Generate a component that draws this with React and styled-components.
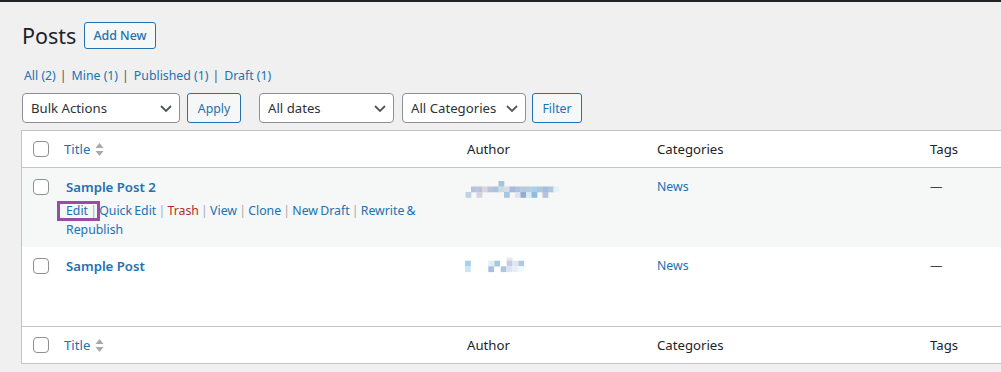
import React from "react";
import styled, { createGlobalStyle } from "styled-components";

const GlobalStyle = createGlobalStyle`
  html, body {
    margin: 0;
    padding: 0;
    background: #f0f0f1;
    overflow: hidden;
    font-family: "Noto Sans", "Open Sans", sans-serif;
    color: #3c434a;
  }
`;

const TopBar = styled.div`
  height: 2px;
  background: #1d2327;
`;

const Wrap = styled.div`
  padding: 20px 0 0 21px;
  width: 1300px;
`;

const HeadingRow = styled.div`
  display: flex;
  align-items: center;
  height: 27px;
  padding-left: 1px;
`;

const PageTitle = styled.h1`
  margin: 0;
  font-size: 21.5px;
  font-weight: 400;
  line-height: 27px;
  color: #1d2327;
`;

const AddNew = styled.a`
  margin-left: 8px;
  height: 27px;
  box-sizing: border-box;
  padding: 0 8px;
  display: flex;
  align-items: center;
  border: 1px solid #2271b1;
  border-radius: 3px;
  background: #f6f7f7;
  color: #2271b1;
  font-size: 12.4px;
  font-weight: 500;
`;

const SubNav = styled.div`
  margin-top: 16px;
  padding-left: 3px;
  display: flex;
  align-items: center;
  height: 20px;
  font-size: 12.3px;
`;

const SubLink = styled.a`
  color: #2271b1;
`;

const SubSep = styled.span`
  color: #50575e;
  margin: 0 5px 0 4px;
`;

const TableNav = styled.div`
  margin-top: 8px;
  display: flex;
  align-items: center;
  height: 30px;
  padding-left: 1px;
`;

const Select = styled.div`
  width: ${(p) => p.$w}px;
  height: 30px;
  box-sizing: border-box;
  margin-left: ${(p) => p.$gap || 0}px;
  padding: 0 7px 0 8px;
  display: flex;
  align-items: center;
  justify-content: space-between;
  border: 1px solid #8c8f94;
  border-radius: 4px;
  background: #fff;
  color: #2c3338;
  font-size: 13.2px;
`;

const Button = styled.div`
  width: ${(p) => p.$w}px;
  height: 30px;
  box-sizing: border-box;
  margin-left: ${(p) => p.$gap || 0}px;
  display: flex;
  align-items: center;
  justify-content: center;
  border: 1px solid #2271b1;
  border-radius: 3px;
  background: #f6f7f7;
  color: #2271b1;
  font-size: 12.3px;
`;

const Table = styled.table`
  margin-top: 7px;
  width: 1280px;
  table-layout: fixed;
  border-collapse: separate;
  border-spacing: 0;
  border: 1px solid #c3c4c7;
  background: #fff;
  font-size: 12.3px;
`;

const Th = styled.th`
  height: 37px;
  box-sizing: border-box;
  padding: 0 10px;
  text-align: left;
  font-weight: 400;
  font-size: 13.2px;
  color: #1d2327;
  vertical-align: middle;
  ${(p) => (p.$foot ? "border-top: 1px solid #c3c4c7;" : "border-bottom: 1px solid #c3c4c7;")}
`;

const CheckCell = styled.td`
  padding: ${(p) => (p.$head ? "0 0 0 11px" : "11px 0 0 11px")};
  vertical-align: ${(p) => (p.$head ? "middle" : "top")};
  ${(p) => p.$head && (p.$foot ? "border-top: 1px solid #c3c4c7;" : "border-bottom: 1px solid #c3c4c7;")}
`;

const Checkbox = styled.span`
  display: block;
  width: 16px;
  height: 16px;
  box-sizing: border-box;
  border: 1px solid #8c8f94;
  border-radius: 4px;
  background: #fff;
`;

const SortLink = styled.a`
  display: inline-flex;
  align-items: center;
  gap: 5px;
  color: #2271b1;
  margin-left: -2px;
`;

const Row = styled.tr`
  background: ${(p) => (p.$alt ? "#f6f7f7" : "#fff")};
`;

const Td = styled.td`
  padding: 9px 10px 8px;
  vertical-align: top;
  line-height: 20px;
  color: #50575e;
`;

const RowTitle = styled.a`
  display: block;
  font-size: 13.2px;
  font-weight: 600;
  color: #2271b1;
  line-height: 20px;
`;

const RowActions = styled.div`
  margin-top: 4px;
  line-height: 19px;
  height: 38px;
  color: #a7aaad;
  word-spacing: -1px;
  visibility: ${(p) => (p.$hidden ? "hidden" : "visible")};
`;

const ActionLink = styled.a`
  color: ${(p) => (p.$danger ? "#b32d2e" : "#2271b1")};
`;

const Highlight = styled.span`
  position: relative;
  display: inline-block;

  &::after {
    content: "";
    position: absolute;
    left: -9px;
    right: -3px;
    top: 0;
    height: 20px;
    box-sizing: border-box;
    border: 3px solid #9c4aa7;
  }
`;

const CellLink = styled.a`
  color: #2271b1;
`;

const Dash = styled.span`
  color: #3c434a;
`;

const Blur = styled.svg`
  display: block;
  margin: ${(p) => p.$mt}px 0 0 -4px;
`;

const Chevron = () => (
  <svg width="12" height="7" viewBox="0 0 12 7">
    <path d="M1 1 L6 6 L11 1" fill="none" stroke="#50575e" strokeWidth="1.8" />
  </svg>
);

const SortIcon = () => (
  <svg width="9" height="15" viewBox="0 0 9 15">
    <path d="M0.5 6 L4.5 1 L8.5 6 Z" fill="#a7aaad" />
    <path d="M0.5 9 L4.5 14 L8.5 9 Z" fill="#a7aaad" />
  </svg>
);

const rowB = ["#b7c3dc", "#b8c4dc", "#d9d5de", "#b6c3dc", "#aec3da", "#c3dde9", "#d8dbe7", "#a6bbd9", "#b1c2dd", "#b9c9de", "#bccadf", "#a4d0ea", "#b2c5de", "#a2bfdd", "#b3c4dc", "#e6f2fa"];

const blurOne = [
  [35.5, 2, "#a9c3d9"],
  ...rowB.map((c, i) => [8 + i * 5.5, 7.5, c]),
  [2.5, 13, "#c3d2e3"],
  [13.5, 13, "#d1d4e3"],
  [41, 13, "#a8c7de"],
  [52, 13, "#dde3ef"],
  [57.5, 13, "#93acd5"],
  [63, 13, "#d7ebf6"],
  [68.5, 13, "#8fbde0"],
  [79.5, 13, "#b6c3d9"],
];

const blurTwo = [
  [43.7, 0.5, "#e8e8ee", 3],
  [2, 3.7, "#a2d0ee"],
  [25.3, 3.7, "#e1edf7"],
  [31.3, 3.7, "#a9c8e0"],
  [43.7, 3.5, "#c8cce0"],
  [49.3, 3.7, "#e1e7f1"],
  [55.3, 3.7, "#b1c9e0"],
  [2, 9.3, "#cbe5f5"],
  [25.3, 9.3, "#a9bfe0"],
  [37.7, 9.3, "#adc4e4"],
  [43.7, 9.3, "#dde4f1"],
  [49.3, 9.3, "#e8eef7"],
  [55.3, 9.3, "#eefaff"],
];

const PixelName = ({ cells, mt }) => (
  <Blur $mt={mt} width="100" height="20" viewBox="0 0 100 20">
    {cells.map(([x, y, c, h], i) => (
      <rect key={i} x={x} y={y} width="5.8" height={h || 5.8} fill={c} />
    ))}
  </Blur>
);

const actions = [
  { label: "Quick Edit" },
  { label: "Trash", danger: true },
  { label: "View" },
  { label: "Clone" },
  { label: "New Draft" },
];

const posts = [
  { title: "Sample Post 2", alt: true, blur: blurOne, mt: 2, showActions: true },
  { title: "Sample Post", alt: false, blur: blurTwo, mt: 1, showActions: false },
];

const HeaderCells = ({ foot }) => (
  <tr>
    <CheckCell as="td" $head $foot={foot}>
      <Checkbox />
    </CheckCell>
    <Th $foot={foot}>
      <SortLink>
        Title <SortIcon />
      </SortLink>
    </Th>
    <Th $foot={foot}>Author</Th>
    <Th $foot={foot}>Categories</Th>
    <Th $foot={foot}>Tags</Th>
  </tr>
);

const App = () => {
  return (
    <>
      <GlobalStyle />
      <TopBar />
      <Wrap>
        <HeadingRow>
          <PageTitle>Posts</PageTitle>
          <AddNew>Add New</AddNew>
        </HeadingRow>
        <SubNav>
          <SubLink>All (2)</SubLink>
          <SubSep>|</SubSep>
          <SubLink>Mine (1)</SubLink>
          <SubSep>|</SubSep>
          <SubLink>Published (1)</SubLink>
          <SubSep>|</SubSep>
          <SubLink>Draft (1)</SubLink>
        </SubNav>
        <TableNav>
          <Select $w={158}>
            Bulk Actions <Chevron />
          </Select>
          <Button $w={54} $gap={7}>Apply</Button>
          <Select $w={135} $gap={18}>
            All dates <Chevron />
          </Select>
          <Select $w={124} $gap={8}>
            All Categories <Chevron />
          </Select>
          <Button $w={50} $gap={6}>Filter</Button>
        </TableNav>
        <Table>
          <colgroup>
            <col style={{ width: 34 }} />
            <col style={{ width: 401 }} />
            <col style={{ width: 190 }} />
            <col style={{ width: 273 }} />
            <col />
          </colgroup>
          <thead>
            <HeaderCells />
          </thead>
          <tbody>
            {posts.map((post) => (
              <Row key={post.title} $alt={post.alt}>
                <CheckCell>
                  <Checkbox />
                </CheckCell>
                <Td>
                  <RowTitle>{post.title}</RowTitle>
                  <RowActions $hidden={!post.showActions}>
                    <Highlight>
                      <ActionLink>Edit</ActionLink> |
                    </Highlight>{" "}
                    {actions.map((a) => (
                      <React.Fragment key={a.label}>
                        <ActionLink $danger={a.danger}>{a.label}</ActionLink> |{" "}
                      </React.Fragment>
                    ))}
                    <ActionLink>Rewrite &amp; Republish</ActionLink>
                  </RowActions>
                </Td>
                <Td>
                  <PixelName cells={post.blur} mt={post.mt} />
                </Td>
                <Td>
                  <CellLink>News</CellLink>
                </Td>
                <Td>
                  <Dash>—</Dash>
                </Td>
              </Row>
            ))}
          </tbody>
          <tfoot>
            <HeaderCells foot />
          </tfoot>
        </Table>
      </Wrap>
    </>
  );
};

export default App;
